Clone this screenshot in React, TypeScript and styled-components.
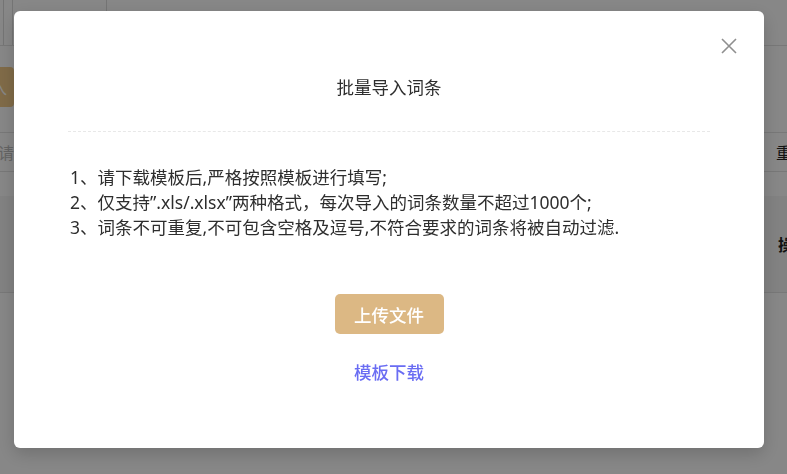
import { createGlobalStyle, styled } from "styled-components";

const GlobalStyle = createGlobalStyle`
    html, body {
        margin: 0;
        padding: 0;
        background: #fff;
    }
    body {
        font-family: "Noto Sans", "Noto Sans CJK SC", sans-serif;
        overflow: hidden;
    }
`;

/* page behind the dialog */
export const Page = styled.div`
    width: 787px;
    height: 474px;
    overflow: hidden;
    background: #fff;
    color: #333;
`;

export const TopBar = styled.div`
    display: flex;
    height: 45px;
    padding-left: 3px;
    border-bottom: 1px solid #e3e3e3;
`;

export const TopTab = styled.div<{ $w: number }>`
    width: ${(p) => p.$w}px;
    border-left: 1px solid #dcdcdc;
    &:last-child {
        border-right: 1px solid #dcdcdc;
    }
`;

export const Toolbar = styled.div`
    display: flex;
    height: 86px;
    padding-top: 21px;
    box-sizing: border-box;
`;

export const ImportButton = styled.div`
    margin-left: -60px;
    width: 74px;
    height: 40px;
    border-radius: 4px;
    background: #f2ca88;
    color: #fff;
    font-size: 15px;
    display: flex;
    align-items: center;
    justify-content: flex-end;
    padding-right: 7px;
    box-sizing: border-box;
`;

export const FilterRow = styled.div`
    display: flex;
    justify-content: space-between;
    align-items: center;
    height: 38px;
    border-top: 1px solid #e3e3e3;
    border-bottom: 1px solid #e3e3e3;
    font-size: 16px;
`;

export const Placeholder = styled.span`
    margin-left: -2px;
    color: #bdbdbd;
`;

export const ResetText = styled.span`
    margin-right: -21px;
    color: #222;
`;

export const TableHead = styled.div`
    display: flex;
    justify-content: flex-end;
    align-items: center;
    height: 96px;
    margin-top: 24px;
    background: #f6f6f6;
    border-bottom: 1px solid #e3e3e3;
    font-size: 16px;
    font-weight: 700;
    color: #222;
`;

export const HeadCell = styled.span`
    margin-right: -23px;
`;

/* dialog */
export const Mask = styled.div`
    position: fixed;
    inset: 0;
    background: rgba(0, 0, 0, 0.47);
`;

export const ModalWrap = styled.div`
    position: fixed;
    inset: 0;
    padding: 11px 0 0 14px;
`;

export const Modal = styled.div`
    position: relative;
    display: flex;
    flex-direction: column;
    width: 750px;
    height: 437px;
    padding: 0 54px;
    box-sizing: border-box;
    background: #fff;
    border-radius: 6px;
    box-shadow: 0 6px 18px rgba(0, 0, 0, 0.18);
`;

export const CloseButton = styled.button`
    position: absolute;
    top: 27px;
    right: 27px;
    width: 16px;
    height: 16px;
    padding: 0;
    border: none;
    background: none;
    cursor: pointer;
    display: flex;
`;

export const Header = styled.div`
    padding: 64px 0 32px;
    border-bottom: 1px dashed #e8e8e8;
`;

export const Title = styled.div`
    text-align: center;
    font-size: 17.5px;
    line-height: 24px;
    color: #2e2e2e;
`;

export const Notes = styled.div`
    padding: 33px 0 0 2px;
    font-size: 17.5px;
    line-height: 25px;
    color: #2e2e2e;
`;

export const Actions = styled.div`
    display: flex;
    flex-direction: column;
    align-items: center;
    margin-top: 54px;
`;

export const UploadButton = styled.button`
    width: 109px;
    height: 40px;
    border: none;
    border-radius: 5px;
    background: #dcb884;
    color: #fff;
    font-family: inherit;
    font-size: 17.5px;
    font-weight: 500;
    cursor: pointer;
`;

export const DownloadLink = styled.a`
    margin-top: 26px;
    font-size: 17.5px;
    line-height: 25px;
    font-weight: 500;
    color: #6a6df3;
    text-decoration: none;
    cursor: pointer;
`;

const notes = [
    "1、请下载模板后,严格按照模板进行填写;",
    "2、仅支持”.xls/.xlsx”两种格式，每次导入的词条数量不超过1000个;",
    "3、词条不可重复,不可包含空格及逗号,不符合要求的词条将被自动过滤.",
];

export default function App() {
    return (
        <>
            <GlobalStyle />
            <Page>
                <TopBar>
                    <TopTab $w={8} />
                    <TopTab $w={93} />
                </TopBar>
                <Toolbar>
                    <ImportButton>批量导入</ImportButton>
                </Toolbar>
                <FilterRow>
                    <Placeholder>请输入词条</Placeholder>
                    <ResetText>重置</ResetText>
                </FilterRow>
                <TableHead>
                    <HeadCell>操作</HeadCell>
                </TableHead>
            </Page>
            <Mask />
            <ModalWrap>
                <Modal>
                    <CloseButton aria-label="关闭">
                        <svg width="16" height="16" viewBox="0 0 16 16">
                            <path d="M1 1L15 15M15 1L1 15" stroke="#8f8f8f" strokeWidth="1.6" fill="none" />
                        </svg>
                    </CloseButton>
                    <Header>
                        <Title>批量导入词条</Title>
                    </Header>
                    <Notes>
                        {notes.map((n) => (
                            <div key={n}>{n}</div>
                        ))}
                    </Notes>
                    <Actions>
                        <UploadButton>上传文件</UploadButton>
                        <DownloadLink>模板下载</DownloadLink>
                    </Actions>
                </Modal>
            </ModalWrap>
        </>
    )
}
